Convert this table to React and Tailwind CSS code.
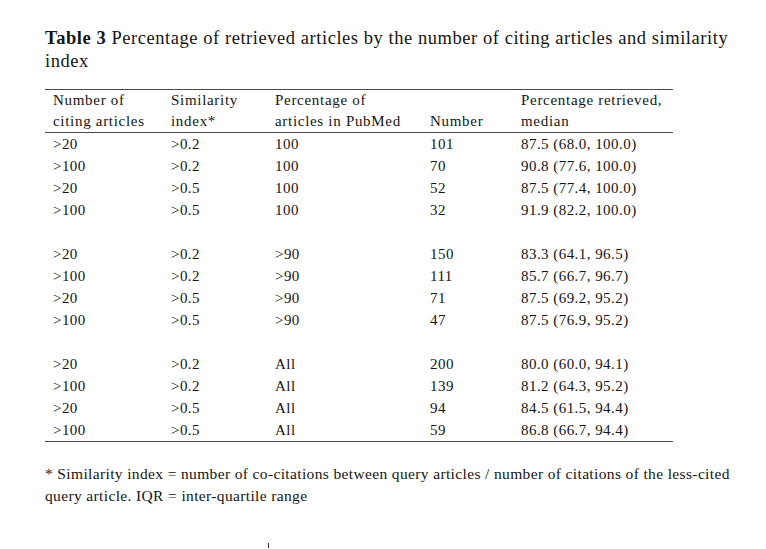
import React from "react";

const groups = [
  [
    [">20", ">0.2", "100", "101", "87.5 (68.0, 100.0)"],
    [">100", ">0.2", "100", "70", "90.8 (77.6, 100.0)"],
    [">20", ">0.5", "100", "52", "87.5 (77.4, 100.0)"],
    [">100", ">0.5", "100", "32", "91.9 (82.2, 100.0)"],
  ],
  [
    [">20", ">0.2", ">90", "150", "83.3 (64.1, 96.5)"],
    [">100", ">0.2", ">90", "111", "85.7 (66.7, 96.7)"],
    [">20", ">0.5", ">90", "71", "87.5 (69.2, 95.2)"],
    [">100", ">0.5", ">90", "47", "87.5 (76.9, 95.2)"],
  ],
  [
    [">20", ">0.2", "All", "200", "80.0 (60.0, 94.1)"],
    [">100", ">0.2", "All", "139", "81.2 (64.3, 95.2)"],
    [">20", ">0.5", "All", "94", "84.5 (61.5, 94.4)"],
    [">100", ">0.5", "All", "59", "86.8 (66.7, 94.4)"],
  ],
];

const widths = ["w-[118px]", "w-[104px]", "w-[155px]", "w-[91px]", "w-[150px]"];

export default function App() {
  return (
    <div className="w-[766px] h-[549px] bg-white text-[#151515] font-['Liberation_Serif',serif] overflow-hidden">
      <div className="pl-[45px] pt-[27px] text-[18.5px] leading-[23px] tracking-[0.55px] whitespace-nowrap">
        <span className="font-bold">Table 3</span> Percentage of retrieved articles by the number of citing articles and similarity
        <br />
        index
      </div>

      <div className="ml-[45px] mt-[16px] w-[628px] border-t border-b border-[#4a4a4a] text-[15px]">
        <div className="flex pl-[8px] leading-[21px] tracking-[0.7px] border-b border-[#4a4a4a] whitespace-nowrap">
          <div className={`${widths[0]} shrink-0`}>Number of<br />citing articles</div>
          <div className={`${widths[1]} shrink-0`}>Similarity<br />index*</div>
          <div className={`${widths[2]} shrink-0`}>Percentage of<br />articles in PubMed</div>
          <div className={`${widths[3]} shrink-0 flex items-end`}>Number</div>
          <div className={`${widths[4]} shrink-0`}>Percentage retrieved,<br />median</div>
        </div>
        {groups.map((g, gi) => (
          <div key={gi}>
            {gi > 0 && <div className="h-[22px]" />}
            {g.map((r, ri) => (
              <div key={ri} className="flex pl-[8px] leading-[22px] tracking-[0.45px] whitespace-nowrap">
                {r.map((c, ci) => (
                  <div key={ci} className={`${widths[ci]} shrink-0`}>{c}</div>
                ))}
              </div>
            ))}
          </div>
        ))}
      </div>

      <div className="pl-[45px] mt-[21px] text-[15.5px] leading-[22px] tracking-[0.36px] whitespace-nowrap">
        * Similarity index = number of co-citations between query articles / number of citations of the less-cited
        <br />
        query article. IQR = inter-quartile range
      </div>

      <div className="ml-[268px] mt-[36px] w-px h-[5px] bg-[#333]" />
    </div>
  );
}
